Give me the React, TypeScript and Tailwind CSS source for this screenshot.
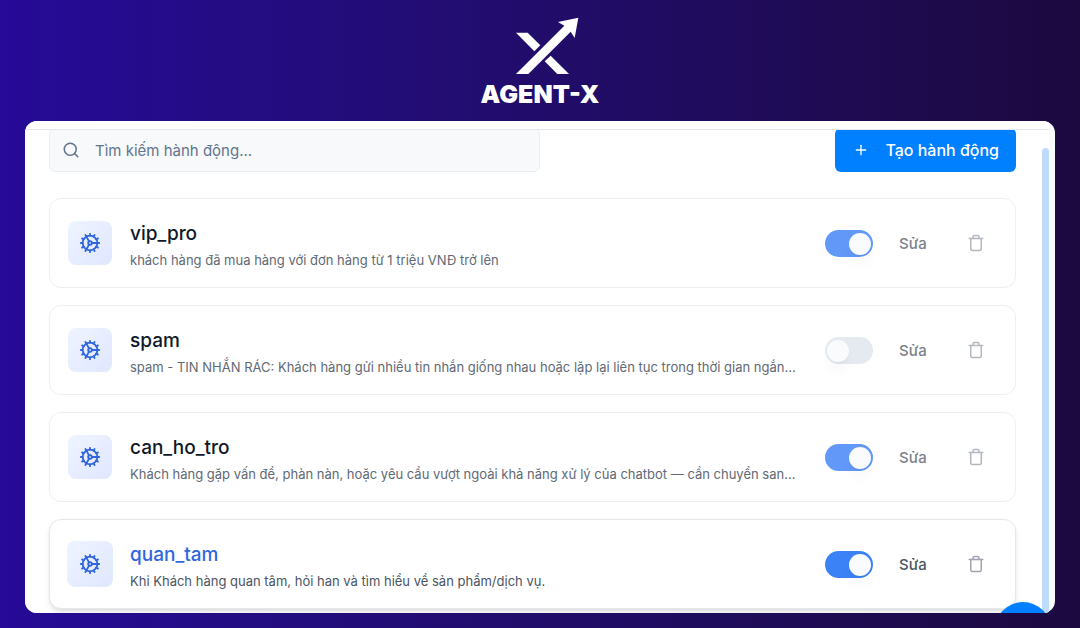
import { Cog, Plus, Search, Trash } from "lucide-react"
import clsx from "clsx"
import { useState } from "react"

type Action = {
  name: string
  description: string
  enabled: boolean
  active?: boolean
}

const initialActions: Action[] = [
  {
    name: "vip_pro",
    description: "khách hàng đã mua hàng với đơn hàng từ 1 triệu VNĐ trở lên",
    enabled: true,
  },
  {
    name: "spam",
    description:
      "spam - TIN NHẮN RÁC: Khách hàng gửi nhiều tin nhắn giống nhau hoặc lặp lại liên tục trong thời gian ngắn...",
    enabled: false,
  },
  {
    name: "can_ho_tro",
    description:
      "Khách hàng gặp vấn đề, phàn nàn, hoặc yêu cầu vượt ngoài khả năng xử lý của chatbot — cần chuyển san...",
    enabled: true,
  },
  {
    name: "quan_tam",
    description: "Khi Khách hàng quan tâm, hỏi han và tìm hiểu về sản phẩm/dịch vụ.",
    enabled: true,
    active: true,
  },
]

const Logo = () => (
  <header className="flex flex-col items-center pt-[17px] text-white">
    <svg
      width="64"
      height="58"
      viewBox="165 51 192 174"
      fill="currentColor"
      className="ml-[14px]"
      aria-hidden="true"
    >
      <path d="M168 98H203L241 136L223 154Z" />
      <path d="M254 184L272 167L327 222H292Z" />
      <path d="M168 222L313 77L294 66L355 53L344 114L332 95L205 222Z" />
    </svg>
    <span className="mt-[3px] text-[25px] leading-8 font-black">AGENT-X</span>
  </header>
)

const Toggle = ({
  action,
  onChange,
}: {
  action: Action
  onChange: () => void
}) => (
  <label className="relative block h-[27px] w-12 shrink-0 cursor-pointer">
    <input
      type="checkbox"
      role="switch"
      checked={action.enabled}
      onChange={onChange}
      aria-label={action.name}
      className={clsx(
        "block h-full w-full appearance-none rounded-full bg-[#e5eaf1]",
        action.active ? "checked:bg-[#3b82f6]" : "checked:bg-[#6298f8]"
      )}
    />
    <span
      className={clsx(
        "pointer-events-none absolute top-[3px] size-[22px] rounded-full bg-[#f9fbfd] shadow-lg shadow-black/5",
        action.enabled ? "right-0.5" : "left-0.5"
      )}
    />
  </label>
)

const ActionCard = ({
  action,
  onToggle,
}: {
  action: Action
  onToggle: () => void
}) => (
  <li
    className={clsx(
      "flex h-[90px] items-center rounded-xl border bg-white px-[18px]",
      action.active ? "border-gray-200 shadow-md" : "border-[#eeeff2]"
    )}
  >
    <div
      className={clsx(
        "flex shrink-0 items-center justify-center rounded-lg bg-linear-to-br from-[#eff4ff] to-[#e0e7ff] text-[#2f66dd]",
        action.active ? "-mx-px size-[46px]" : "size-11"
      )}
    >
      <Cog size={22} />
    </div>
    <div className="ml-[18px] min-w-0 flex-1 pt-1.5">
      <h2
        className={clsx(
          "text-[19px] leading-7 font-medium",
          action.active ? "text-[#2f66dd]" : "text-gray-900"
        )}
      >
        {action.name}
      </h2>
      <p
        className={clsx(
          "truncate text-[13px] leading-6",
          action.active ? "text-[#4b5563]" : "text-[#616975]"
        )}
      >
        {action.description}
      </p>
    </div>
    <div className="ml-5 flex items-center">
      <Toggle action={action} onChange={onToggle} />
      <button
        className={clsx(
          "ml-[26px] w-9 pt-0.5 text-left text-[15px] font-medium",
          action.active ? "text-[#4b5563]" : "text-[#7b818c]"
        )}
      >
        Sửa
      </button>
      <button
        aria-label="Xóa"
        className={clsx(
          "mr-3 ml-8",
          action.active ? "text-[#a0a5af]" : "text-[#b3b7bf]"
        )}
      >
        <Trash size={18} />
      </button>
    </div>
  </li>
)

export default function App() {
  const [actions, setActions] = useState(initialActions)

  const toggle = (name: string) =>
    setActions(
      actions.map((a) => (a.name === name ? { ...a, enabled: !a.enabled } : a))
    )

  return (
    <div className="flex h-screen flex-col bg-linear-to-r from-[#260a98] to-[#1c0940] px-[25px] pb-[15px] font-['Inter',sans-serif]">
      <Logo />
      <main className="relative mt-[11px] flex min-h-0 flex-1 flex-col overflow-hidden rounded-xl bg-[#f8fafc]">
        <div className="mr-1.5 h-[9px] shrink-0 border-b border-gray-200 bg-white" />
        <div className="mr-1.5 flex min-h-0 flex-1 bg-white">
          <div className="min-w-0 flex-1 overflow-hidden pr-[26px] pl-6">
            <div className="-mt-0.5 flex h-11 justify-between">
              <label className="flex w-[491px] items-center rounded-md border border-[#e9eef3] bg-[#f7f9fb] px-3">
                <Search size={18} className="shrink-0 text-slate-500" />
                <input
                  type="search"
                  aria-label="Tìm kiếm hành động"
                  placeholder="Tìm kiếm hành động..."
                  className="ml-[15px] min-w-0 flex-1 bg-transparent pt-0.5 text-[15px] outline-none placeholder:text-slate-500"
                />
              </label>
              <button className="flex items-center rounded-md bg-[#007fff] pr-[17px] pl-[18px] text-base font-medium text-white">
                <Plus size={16} className="mr-4" />
                Tạo hành động
              </button>
            </div>
            <ul className="mt-[26px] flex flex-col gap-[17px]">
              {actions.map((action) => (
                <ActionCard
                  key={action.name}
                  action={action}
                  onToggle={() => toggle(action.name)}
                />
              ))}
            </ul>
          </div>
          <div className="mt-[18px] w-[7px] rounded-t-full bg-[#bfdbfe]" />
        </div>
        <button
          aria-label="Trợ giúp"
          className="absolute right-1 -bottom-[45px] size-14 rounded-full bg-[#007fff] shadow-lg"
        />
      </main>
    </div>
  )
}
